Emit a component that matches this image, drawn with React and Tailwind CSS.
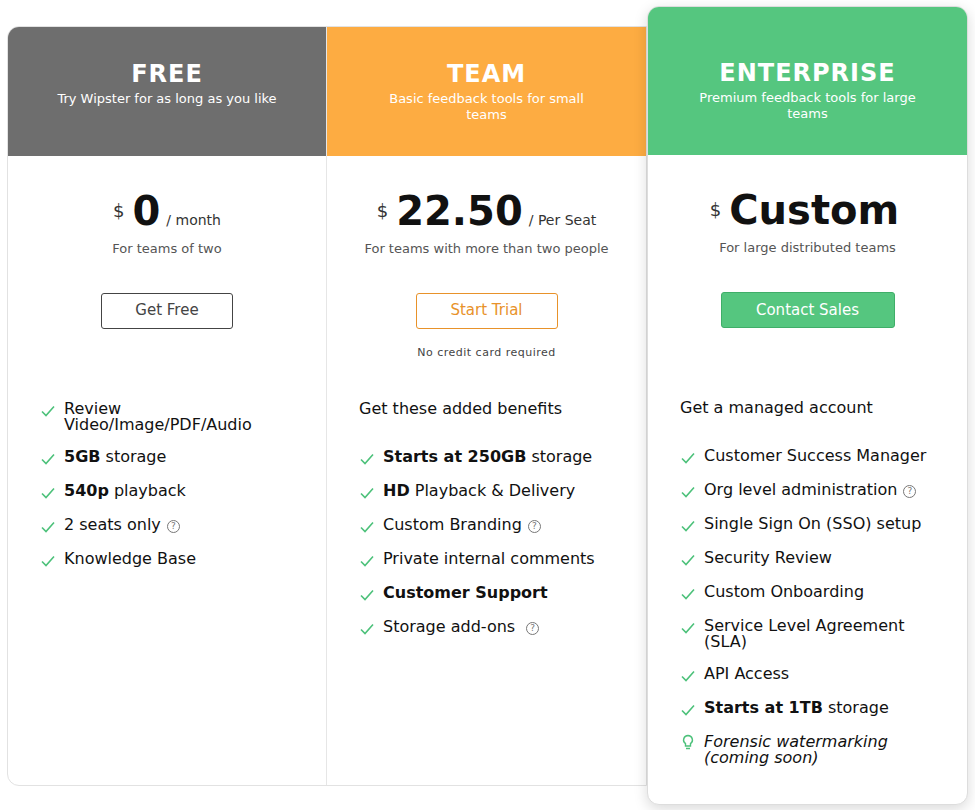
import React from "react";

const Check = () => (
  <svg width="16" height="16" viewBox="0 0 16 16" className="shrink-0 mt-[2px]" fill="none" stroke="#4cc17a" strokeWidth="1.6"><path d="M2 8.5l4 4 8-9" /></svg>
);
const Bulb = () => (
  <svg width="16" height="16" viewBox="0 0 16 16" className="shrink-0" fill="none" stroke="#4cc17a" strokeWidth="1.4"><path d="M8 1.5a4.5 4.5 0 0 0-2.5 8.2V12h5V9.7A4.5 4.5 0 0 0 8 1.5zM6 14.5h4" /></svg>
);
const Q = () => (
  <span className="inline-flex items-center justify-center w-[13px] h-[13px] rounded-full border border-[#777] text-[9px] text-[#777] ml-[6px] align-[1px] leading-none">?</span>
);

function Feature({ children, icon }) {
  return (
    <li className="flex gap-[8px] items-start leading-[16px]">
      {icon || <Check />}
      <span>{children}</span>
    </li>
  );
}

function Column({ title, sub, color, hpt, price, unit, note, btn, btnCls, btnW, extra, head, features, className }) {
  return (
    <div className={"flex flex-col " + className}>
      <div className={"flex flex-col items-center text-white text-center px-[40px] " + color + " " + hpt}>
        <div className="text-[24px] font-bold tracking-[1px] leading-[28px]">{title}</div>
        <div className="text-[13px] leading-[16px] mt-[3px]">{sub}</div>
      </div>
      <div className="flex flex-col flex-1">
        <div className="flex items-baseline justify-center mt-[33px] h-[44px]">
          <span className="text-[18px] text-[#333] mr-[8px] relative top-[-8px]">$</span>
          <span className="text-[40px] font-bold text-[#111] leading-[44px]">{price}</span>
          <span className="text-[14px] text-[#333] ml-[6px]">{unit}</span>
        </div>
        <div className="text-center text-[13px] text-[#555] mt-[8px] leading-[16px]">{note}</div>
        <div className="flex justify-center mt-[36px]">
          <div className={"h-[36px] rounded-[3px] flex items-center justify-center text-[15px] " + btnCls + " " + btnW}>{btn}</div>
        </div>
        <div className="h-[24px] text-center text-[11px] text-[#444] tracking-[0.5px] pt-[16px]">{extra}</div>
        <div className="px-[32px] mt-[48px] text-[16px] text-[#111]">
          {head && <div className="leading-[16px] mb-[32px]">{head}</div>}
          <ul className="flex flex-col gap-[16px]">{features}</ul>
        </div>
      </div>
    </div>
  );
}

export default function App() {
  return (
    <div className="w-[975px] h-[810px] bg-white flex items-center pl-[7px] pt-[1px]" style={{ fontFamily: "'DejaVu Sans', sans-serif" }}>
      <div className="flex h-[760px] w-[640px] border border-[#e2e2e2] rounded-l-[12px] overflow-hidden">
        <Column className="w-[320px] border-r border-[#e6e6e6]" title="FREE" sub="Try Wipster for as long as you like" color="bg-[#6e6e6e] h-[129px]" hpt="pt-[33px]"
          price="0" unit="/  month" note="For teams of two" btn="Get Free" btnCls="border border-[#444] text-[#444]" btnW="w-[132px]"
          features={<>
            <Feature>Review Video/Image/PDF/Audio</Feature>
            <Feature><b>5GB</b> storage</Feature>
            <Feature><b>540p</b> playback</Feature>
            <Feature>2 seats only<Q /></Feature>
            <Feature>Knowledge Base</Feature>
          </>} />
        <Column className="w-[320px]" title="TEAM" sub="Basic feedback tools for small teams" color="bg-[#fdac42] h-[129px]" hpt="pt-[33px]"
          price="22.50" unit="/  Per Seat" note="For teams with more than two people" btn="Start Trial" btnCls="border border-[#e8922a] text-[#e8922a]" btnW="w-[142px]"
          extra="No credit card required" head="Get these added benefits"
          features={<>
            <Feature><b>Starts at 250GB</b> storage</Feature>
            <Feature><b>HD</b> Playback &amp; Delivery</Feature>
            <Feature>Custom Branding<Q /></Feature>
            <Feature>Private internal comments</Feature>
            <Feature><b>Customer Support</b></Feature>
            <Feature>Storage add-ons <Q /></Feature>
          </>} />
      </div>
      <div className="h-[799px] w-[321px] border border-[#ddd] rounded-[12px] overflow-hidden shadow-[0_4px_14px_rgba(0,0,0,0.15)] bg-white">
        <Column className="h-full" title="ENTERPRISE" sub="Premium feedback tools for large teams" color="bg-[#55c67f] h-[148px]" hpt="pt-[52px]"
          price="Custom" unit="" note="For large distributed teams" btn="Contact Sales" btnCls="bg-[#55c67f] border border-[#3fae68] text-white" btnW="w-[174px]"
          head="Get a managed account"
          features={<>
            <Feature>Customer Success Manager</Feature>
            <Feature>Org level administration<Q /></Feature>
            <Feature>Single Sign On (SSO) setup</Feature>
            <Feature>Security Review</Feature>
            <Feature>Custom Onboarding</Feature>
            <Feature>Service Level Agreement (SLA)</Feature>
            <Feature>API Access</Feature>
            <Feature><b>Starts at 1TB</b> storage</Feature>
            <Feature icon={<Bulb />}><i>Forensic watermarking (coming soon)</i></Feature>
          </>} />
      </div>
    </div>
  );
}
